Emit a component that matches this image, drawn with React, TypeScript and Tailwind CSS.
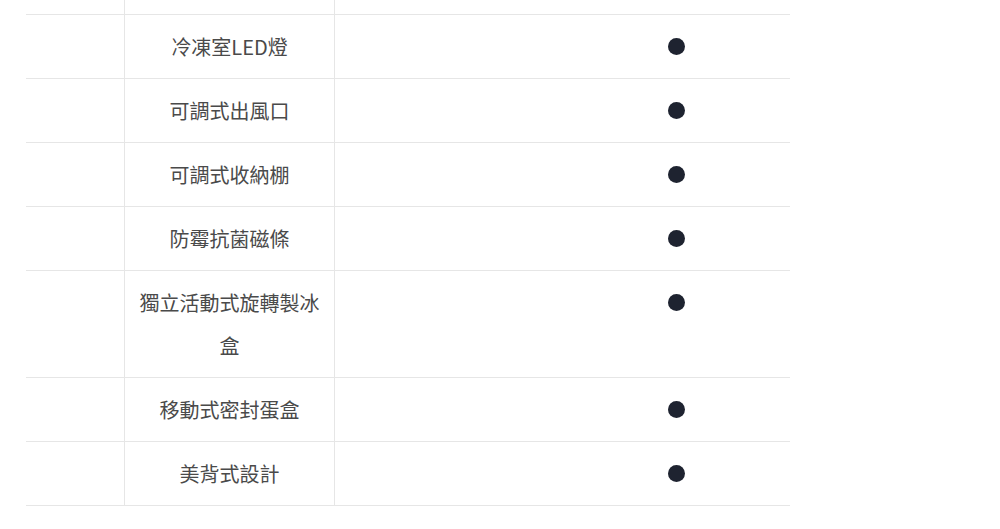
import React from 'react';

type Row = { label: React.ReactNode; has: boolean };

const rows: Row[] = [
  { label: '冷凍室LED燈', has: true },
  { label: '可調式出風口', has: true },
  { label: '可調式收納棚', has: true },
  { label: '防霉抗菌磁條', has: true },
  { label: '獨立活動式旋轉製冰盒', has: true },
  { label: '移動式密封蛋盒', has: true },
  { label: '美背式設計', has: true },
];

export default function App() {
  return (
    <div
      className="min-h-screen w-full bg-white text-[#4a4a4a] overflow-hidden"
      style={{ fontFamily: '"Noto Sans CJK TC", "Noto Sans", sans-serif' }}
    >
      <div className="ml-[26px] w-[764px]">
        {/* Tail of the previous row */}
        <div className="grid grid-cols-[98px_210px_456px] h-[15px] border-b border-[#e6e6e6]">
          <div />
          <div className="border-l border-[#e6e6e6]" />
          <div className="border-l border-[#e6e6e6]" />
        </div>

        {rows.map((row, i) => (
          <div
            key={i}
            className="grid grid-cols-[98px_210px_456px] border-b border-[#e6e6e6]"
          >
            <div />
            <div className="border-l border-[#e6e6e6] px-[13px] py-[10px] text-center text-[20px] leading-[43px]">
              {row.label}
            </div>
            <div className="border-l border-[#e6e6e6] py-[10px] pl-[333px]">
              {row.has && (
                <div className="flex h-[43px] items-center">
                  <span className="block h-[17px] w-[17px] rounded-full bg-[#1e2330]" />
                </div>
              )}
            </div>
          </div>
        ))}
      </div>
    </div>
  );
}
